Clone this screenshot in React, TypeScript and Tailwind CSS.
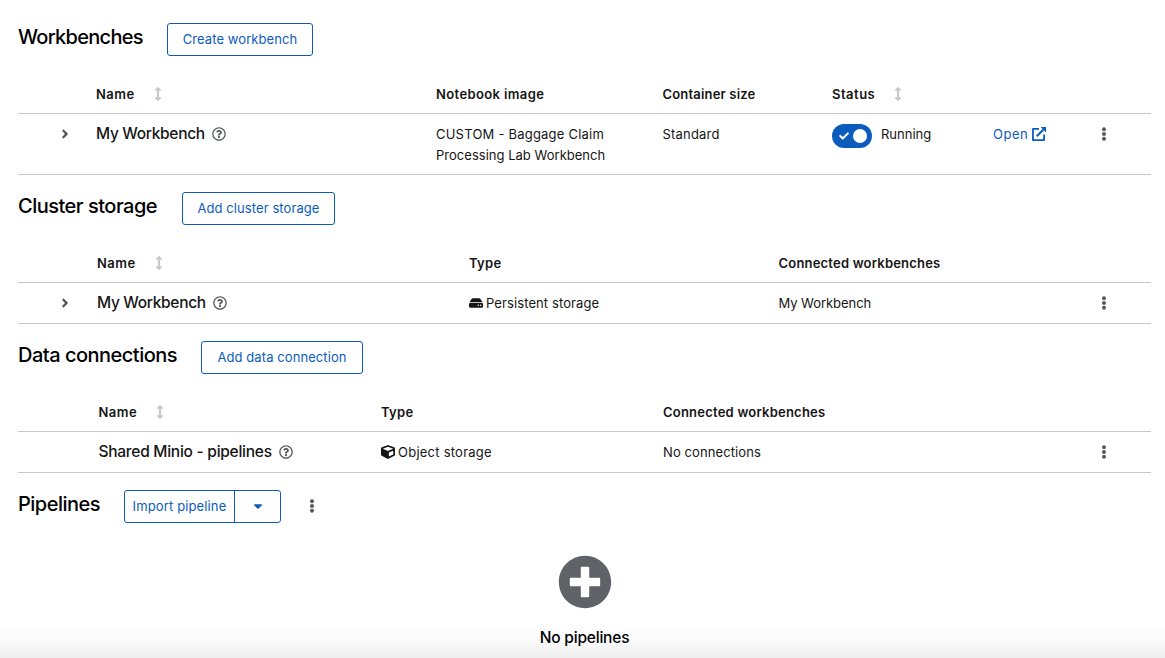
import type { ReactNode } from "react";
import {
  FaAngleRight,
  FaArrowsAltV,
  FaCaretDown,
  FaCheck,
  FaCube,
  FaEllipsisV,
  FaHdd,
  FaPlusCircle,
  FaRegQuestionCircle,
} from "react-icons/fa";

const headRow = "grid h-[58px] items-start border-b border-[#c7c7c7] pt-[28px] text-[13px] leading-[21px] font-semibold";
const bodyRow = "grid items-start border-b border-[#c7c7c7] pt-[10px] text-[13px] leading-[21px]";
const colsWorkbench = "grid-cols-[78px_340px_226.5px_169.5px_161px_1fr]";
const colsStorage = "grid-cols-[79px_372px_309.5px_1fr]";
const colsData = "grid-cols-[80.5px_282.5px_282px_1fr]";

function SectionHeader({ title, titleClass, children }: { title: string; titleClass: string; children: ReactNode }) {
  return (
    <div className="flex h-[33px] items-center">
      <h2 className={`-mt-[5px] shrink-0 text-[20px] leading-[26px] font-medium whitespace-nowrap text-black ${titleClass}`}>{title}</h2>
      {children}
    </div>
  );
}

function OutlineButton({ label, className }: { label: string; className: string }) {
  return (
    <button className={`flex h-[33px] items-center justify-center rounded-[3px] border border-[#0b5cbd] pt-px text-[13px] tracking-[0.08px] whitespace-nowrap text-[#0b5cbd] ${className}`}>
      {label}
    </button>
  );
}

function Sortable({ label, className }: { label: string; className: string }) {
  return (
    <span className="flex h-[21px] items-center">
      <span className={`whitespace-nowrap ${className}`}>{label}</span>
      <FaArrowsAltV className="-mt-px h-[14px] w-[14px] text-[#c9c9c9]" />
    </span>
  );
}

function ResourceName({ label, className }: { label: string; className: string }) {
  return (
    <span className="-mt-px flex h-[21px] items-center">
      <span className={`text-[15.5px] font-medium whitespace-nowrap ${className}`}>{label}</span>
      <FaRegQuestionCircle className="mt-px h-[14px] w-[14px] text-[#55585c]" />
    </span>
  );
}

function ExternalLinkIcon() {
  return (
    <svg viewBox="0 0 14 14" className="-mt-px h-[14px] w-[14px]" fill="none" stroke="currentColor">
      <path d="M7 1.9H0.95V13.05H12.1V7.6" strokeWidth="1.8" strokeLinejoin="round" />
      <path d="M4.7 9.3L11.3 2.7" strokeWidth="2" />
      <path d="M8.6 0H14V5.4Z" fill="currentColor" stroke="none" />
    </svg>
  );
}

function Expand() {
  return (
    <span className="flex h-[21px] items-center pl-[39.5px]">
      <FaAngleRight className="-mt-px h-[14px] w-[14px] text-[#4f5255]" />
    </span>
  );
}

function Kebab() {
  return <FaEllipsisV className="-mt-[2px] h-[14px] w-[14px] text-[#55585c]" />;
}

function RowActions() {
  return (
    <span className="mr-[40px] ml-auto flex h-[21px] items-center">
      <Kebab />
    </span>
  );
}

export default function App() {
  return (
    <main className="relative h-[658px] w-[1165px] overflow-hidden bg-white pr-[14px] pl-[18px] font-[Inter,sans-serif] text-[#151515]">
      <section className="pt-[23px]">
        <SectionHeader title="Workbenches" titleClass="w-[149px] tracking-[-0.7px]">
          <OutlineButton label="Create workbench" className="w-[146px]" />
        </SectionHeader>
        <div className={`${headRow} ${colsWorkbench}`}>
          <span />
          <Sortable label="Name" className="w-[55px] tracking-[0.5px]" />
          <span className="tracking-[0.38px]">Notebook image</span>
          <span className="tracking-[0.18px]">Container size</span>
          <Sortable label="Status" className="w-[59px] tracking-[0.5px]" />
        </div>
        <div className={`${bodyRow} ${colsWorkbench} h-[61px]`}>
          <Expand />
          <ResourceName label="My Workbench" className="w-[116px] tracking-[-0.32px]" />
          <span>
            <span className="tracking-[0.22px]">CUSTOM - Baggage Claim</span>
            <br />
            <span className="tracking-[0.02px]">Processing Lab Workbench</span>
          </span>
          <span className="tracking-[0.2px]">Standard</span>
          <span className="flex h-[24px] items-center">
            <span className="flex h-[24px] w-[40px] items-center justify-between rounded-full bg-[#0b5cbd] pr-[5px] pl-[7px]">
              <FaCheck className="h-[10px] w-[10px] text-white" />
              <span className="h-[14px] w-[14px] rounded-full bg-white" />
            </span>
            <span className="-mt-[3px] ml-[9px]">Running</span>
          </span>
          <span className="flex h-[21px]">
            <span className="flex items-center text-[#0b5cbd]">
              <span className="w-[39px] tracking-[0.5px]">Open</span>
              <ExternalLinkIcon />
            </span>
            <RowActions />
          </span>
        </div>
      </section>

      <section className="pt-[17px]">
        <SectionHeader title="Cluster storage" titleClass="w-[164px] tracking-[-0.5px]">
          <OutlineButton label="Add cluster storage" className="w-[153px]" />
        </SectionHeader>
        <div className={`${headRow} ${colsStorage}`}>
          <span />
          <Sortable label="Name" className="w-[55px] tracking-[0.5px]" />
          <span className="tracking-[0.3px]">Type</span>
          <span className="tracking-[0.2px]">Connected workbenches</span>
        </div>
        <div className={`${bodyRow} ${colsStorage} h-[41px]`}>
          <Expand />
          <ResourceName label="My Workbench" className="w-[116px] tracking-[-0.32px]" />
          <span className="flex h-[21px] items-center gap-[3px]">
            <FaHdd className="-mt-px h-[14px] w-[14px]" />
            <span className="tracking-[0.1px]">Persistent storage</span>
          </span>
          <span className="flex">
            <span className="tracking-[-0.05px]">My Workbench</span>
            <RowActions />
          </span>
        </div>
      </section>

      <section className="pt-[17px]">
        <SectionHeader title="Data connections" titleClass="w-[183px] tracking-[-0.5px]">
          <OutlineButton label="Add data connection" className="w-[162px]" />
        </SectionHeader>
        <div className={`${headRow} ${colsData}`}>
          <span />
          <Sortable label="Name" className="w-[54.5px] tracking-[0.5px]" />
          <span className="tracking-[0.3px]">Type</span>
          <span className="tracking-[0.22px]">Connected workbenches</span>
        </div>
        <div className={`${bodyRow} ${colsData} h-[41px]`}>
          <span />
          <ResourceName label="Shared Minio - pipelines" className="w-[180.5px] tracking-[-0.26px]" />
          <span className="flex h-[21px] items-center gap-[3px]">
            <FaCube className="-mt-px h-[14px] w-[14px]" />
            <span className="tracking-[0.24px]">Object storage</span>
          </span>
          <span className="flex">
            <span className="tracking-[0.1px]">No connections</span>
            <RowActions />
          </span>
        </div>
      </section>

      <section className="pt-[17px]">
        <SectionHeader title="Pipelines" titleClass="w-[106px] tracking-[-0.5px]">
          <div className="flex h-[33px] w-[157px] rounded-[3px] border border-[#0b5cbd] text-[13px] text-[#0b5cbd]">
            <button className="w-[110px] border-r border-[#0b5cbd] pt-px tracking-[0.13px] whitespace-nowrap">Import pipeline</button>
            <button className="flex flex-1 items-center justify-center">
              <FaCaretDown className="-mt-px h-[14px] w-[14px]" />
            </button>
          </div>
          <span className="ml-[24px]">
            <Kebab />
          </span>
        </SectionHeader>
        <div className="flex flex-col items-center pt-[32px] text-black">
          <FaPlusCircle className="h-[54px] w-[54px] text-[#5f6267]" />
          <h3 className="mt-[17px] text-[15.5px] leading-[24px] font-medium tracking-[-0.2px]">No pipelines</h3>
        </div>
      </section>
      <div className="pointer-events-none absolute inset-x-0 bottom-0 h-[34px] bg-gradient-to-b from-transparent via-black/2 to-black/7" />
    </main>
  );
}
